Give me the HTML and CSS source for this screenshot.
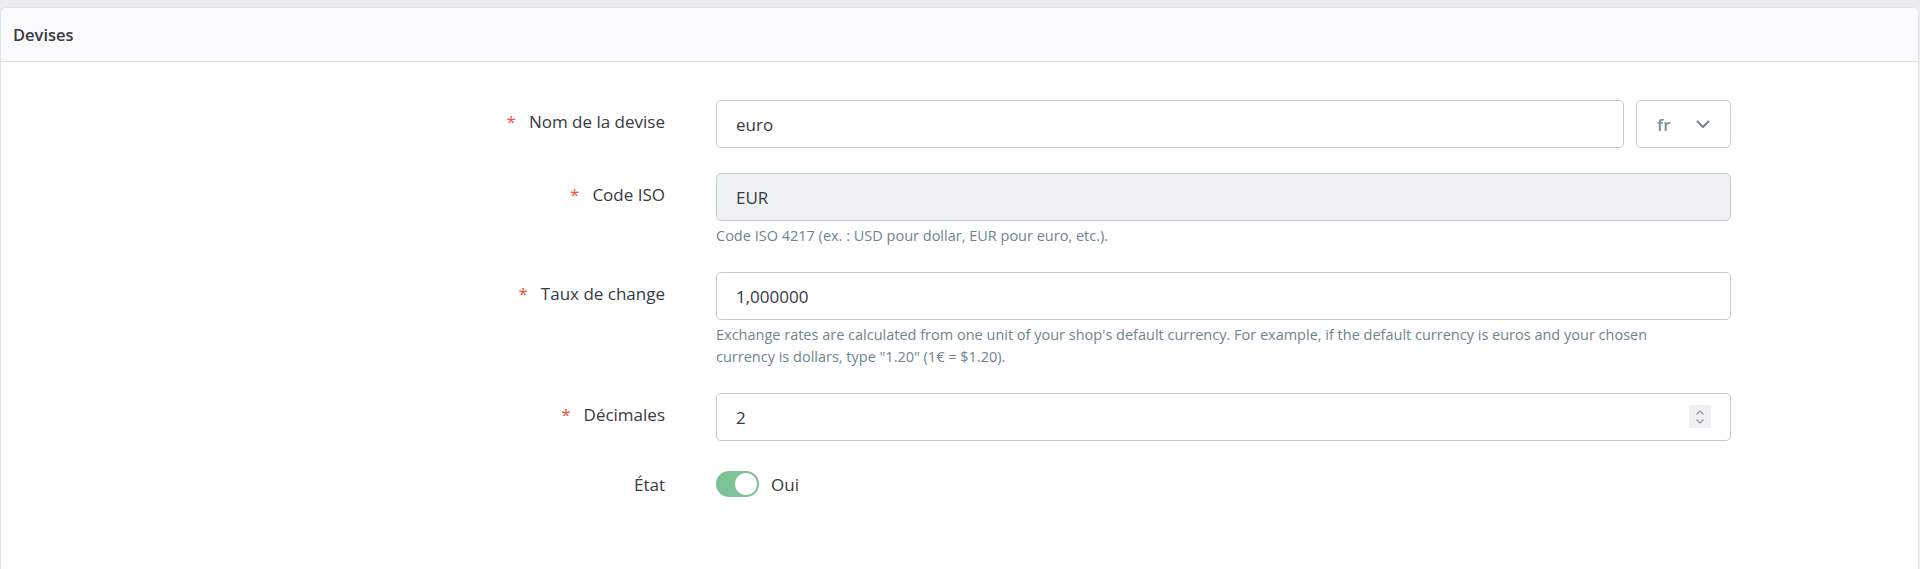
FILE: index.html
```html
<!DOCTYPE html>
<html>
  <head>
    <link rel="stylesheet" href="styles.css">
  </head>
  <body>
    <div class="page">
      <div class="card">
        <div class="card-header">Devises</div>

        <form class="card-body">
          <div class="form-row">
            <label class="form-label" for="name"><span class="required">*</span>Nom de la devise</label>
            <div class="form-control-wrap">
              <div class="input-group">
                <input type="text" id="name" class="form-input" value="euro" />
                <button type="button" class="lang-select">
                  fr
                  <svg width="14" height="9" viewBox="0 0 14 9">
                    <path d="M1.5 1.5 L7 7 L12.5 1.5" fill="none" stroke="#6c868e" stroke-width="2" stroke-linecap="round" stroke-linejoin="round" />
                  </svg>
                </button>
              </div>
            </div>
          </div>

          <div class="form-row">
            <label class="form-label" for="iso"><span class="required">*</span>Code ISO</label>
            <div class="form-control-wrap">
              <input type="text" id="iso" class="form-input" value="EUR" disabled />
              <p class="help">Code ISO 4217 (ex. : USD pour dollar, EUR pour euro, etc.).</p>
            </div>
          </div>

          <div class="form-row">
            <label class="form-label" for="rate"><span class="required">*</span>Taux de change</label>
            <div class="form-control-wrap">
              <input type="text" id="rate" class="form-input" value="1,000000" />
              <p class="help help-wide">Exchange rates are calculated from one unit of your shop's default currency. For example, if the default currency is euros and your chosen currency is dollars, type "1.20" (1€ = $1.20).</p>
            </div>
          </div>

          <div class="form-row">
            <label class="form-label" for="decimals"><span class="required">*</span>Décimales</label>
            <div class="form-control-wrap">
              <div class="number-wrap">
                <input type="text" id="decimals" class="form-input" value="2" />
                <span class="spinner">
                  <svg width="10" height="16" viewBox="0 0 10 16">
                    <path d="M1.5 5.5 L5 2 L8.5 5.5 M1.5 10.5 L5 14 L8.5 10.5" fill="none" stroke="#8a9499" stroke-width="1.2" />
                  </svg>
                </span>
              </div>
            </div>
          </div>

          <div class="form-row">
            <label class="form-label label-switch">État</label>
            <div class="form-control-wrap switch-row">
              <span class="switch"><span class="switch-knob"></span></span>
              <span class="switch-label">Oui</span>
            </div>
          </div>
        </form>
      </div>
    </div>
  </body>
</html>
```

FILE: styles.css
```css
body {
  margin: 0;
  font-family: "Open Sans", "Noto Sans", sans-serif;
  color: #363a41;
  background: #ebecee;
}

.page {
  padding-top: 7px;
}

.card {
  background: white;
  border: 1px solid #dbe6e9;
  border-bottom: none;
  border-radius: 6px 6px 0 0;
  margin-right: 1px;
  min-height: 562px;
}

.card-header {
  height: 53px;
  display: flex;
  align-items: center;
  padding: 0 12px;
  background: #fafbfc;
  border-bottom: 1px solid #dbe6e9;
  border-radius: 6px 6px 0 0;
  font-size: 16.5px;
  font-weight: 600;
  color: #363a41;
}

.card-body {
  padding-top: 38px;
}

.form-row {
  display: grid;
  grid-template-columns: 664px 1015px;
  column-gap: 51px;
  margin-bottom: 25px;
}

.form-label {
  text-align: right;
  padding-top: 10px;
  font-size: 17px;
  line-height: 24px;
  color: #363a41;
}

.label-switch {
  padding-top: 7px;
}

.required {
  color: #f54c3e;
  margin-right: 13px;
}

.form-input {
  box-sizing: border-box;
  width: 100%;
  height: 48px;
  padding: 0 19px;
  border: 1px solid #bbcdd2;
  border-radius: 5px;
  font-family: inherit;
  font-size: 17px;
  color: #363a41;
  background: white;
  outline: none;
}

.form-input:disabled {
  background: #eff1f2;
  color: #363a41;
}

.input-group {
  display: flex;
  gap: 12px;
}

.lang-select {
  flex: 0 0 95px;
  height: 48px;
  display: flex;
  align-items: center;
  justify-content: space-between;
  padding: 0 20px;
  border: 1px solid #bbcdd2;
  border-radius: 5px;
  background: white;
  font-family: inherit;
  font-size: 17px;
  font-weight: 600;
  color: #7a9198;
}

.help {
  margin: 4px 0 0;
  font-size: 14.5px;
  line-height: 22px;
  color: #6c868e;
}

.help-wide {
  max-width: 950px;
}

.number-wrap {
  position: relative;
}

.spinner {
  position: absolute;
  right: 20px;
  top: 12px;
  width: 22px;
  height: 23px;
  display: flex;
  align-items: center;
  justify-content: center;
  background: #eef0f4;
  border-radius: 2px;
}

.switch-row {
  display: flex;
  align-items: center;
  gap: 12px;
  height: 36px;
}

.switch {
  width: 43px;
  height: 26px;
  border-radius: 13px;
  background: #7cc295;
  display: flex;
  align-items: center;
  justify-content: flex-end;
  padding: 0 2px;
  box-sizing: border-box;
}

.switch-knob {
  width: 22px;
  height: 22px;
  border-radius: 50%;
  background: white;
}

.switch-label {
  font-size: 17px;
  color: #363a41;
}
```
